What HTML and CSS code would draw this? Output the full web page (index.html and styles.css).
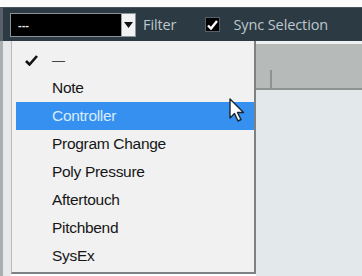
FILE: index.html
```html
<!DOCTYPE html>
<html>
<head>
<meta charset="utf-8">
<link rel="stylesheet" href="styles.css">
</head>
<body>
<div class="topstrip"></div>
<div class="toolbar">
  <div class="combo">
    <div class="combo-field">---</div>
    <div class="combo-btn">
      <svg width="9" height="6" viewBox="0 0 9 6"><path d="M0 0H9L4.5 6Z" fill="#111"/></svg>
    </div>
  </div>
  <span class="label filter">Filter</span>
  <span class="checkbox">
    <svg width="11" height="10" viewBox="0 0 11 10"><path d="M1 5.5L4 8.5L10 1" fill="none" stroke="#fff" stroke-width="2.4"/></svg>
  </span>
  <span class="label">Sync Selection</span>
</div>
<div class="main">
  <div class="gutter"></div>
  <div class="menu">
    <div class="item first"><span class="mark"><svg width="13" height="11" viewBox="0 0 13 11"><path d="M1 6L4.5 9.5L12 1" fill="none" stroke="#111" stroke-width="2.6"/></svg></span><span class="dash">—</span></div>
    <div class="item"><span class="mark"></span>Note</div>
    <div class="item selected"><span class="mark"></span>Controller</div>
    <div class="item"><span class="mark"></span>Program Change</div>
    <div class="item"><span class="mark"></span>Poly Pressure</div>
    <div class="item"><span class="mark"></span>Aftertouch</div>
    <div class="item"><span class="mark"></span>Pitchbend</div>
    <div class="item"><span class="mark"></span>SysEx</div>
  </div>
  <div class="rightpanel">
    <div class="rp-head"><div class="tick"></div></div>
    <div class="rp-body"></div>
  </div>
  <svg class="cursor" width="16" height="25" viewBox="0 0 16 25"><path d="M1 1V20L5.5 15.5L9 23L12 21.5L8.5 14.5H14.5Z" fill="#fff" stroke="#1b2530" stroke-width="1.4" stroke-linejoin="round"/></svg>
</div>
</body>
</html>
```
FILE: styles.css
```css
html, body {
  margin: 0;
  padding: 0;
  background: #ffffff;
  width: 362px;
  height: 276px;
  overflow: hidden;
}
.topstrip {
  height: 7px;
  background: #fbfbfb;
}
.toolbar {
  height: 34px;
  background: #2b3a43;
  border-left: 3px solid #59626a;
  border-top: 1px solid #4a555c;
  display: flex;
  align-items: center;
  padding-left: 7px;
  box-sizing: border-box;
  font-family: "Open Sans", "Noto Sans", sans-serif;
}
.combo {
  display: flex;
  height: 22px;
  border: 1px solid #8b9298;
  margin-top: 1px;
}
.combo-field {
  width: 110px;
  background: #000;
  color: #e8e8e8;
  font-family: "Liberation Sans", sans-serif;
  font-size: 11px;
  font-weight: bold;
  line-height: 22px;
  padding-left: 7px;
  box-sizing: border-box;
}
.combo-btn {
  width: 13px;
  background: #f2f2f2;
  border-left: 1px solid #9aa0a4;
  display: flex;
  align-items: center;
  justify-content: center;
}
.label {
  color: #bec8cd;
  font-size: 14.5px;
  letter-spacing: -0.1px;
}
.filter {
  margin-left: 7px;
}
.checkbox {
  width: 13px;
  height: 13px;
  background: #000;
  border: 1px solid #55606a;
  margin-left: 29px;
  margin-right: 13px;
  display: flex;
  align-items: center;
  justify-content: center;
}
.main {
  position: relative;
  display: flex;
  height: 235px;
}
.gutter {
  width: 8px;
  background: #e6e8e9;
  border-left: 3px solid #a9aeb1;
}
.menu {
  width: 238px;
  height: 227px;
  background: #f1f1f1;
  border-left: 1px solid #b9bcbe;
  border-right: 2px solid #7d8184;
  border-bottom: 2px solid #7d8184;
  padding: 4px 0 0 4px;
  font-family: "Liberation Sans", Arial, sans-serif;
  font-size: 15.5px;
  color: #161616;
  box-sizing: content-box;
}
.item {
  height: 28px;
  display: flex;
  align-items: center;
  letter-spacing: -0.3px;
}
.item.first {
  height: 29px;
  padding-top: 2px;
  box-sizing: border-box;
}
.item.selected {
  background: #3590f0;
  color: #d8ecff;
}
.mark {
  width: 36px;
  flex: none;
  display: flex;
  padding-left: 9px;
  box-sizing: border-box;
}
.dash {
  color: #444;
  font-size: 13px;
}
.rightpanel {
  flex: 1;
  display: flex;
  flex-direction: column;
  padding-top: 3px;
  background: #eef0f1;
}
.rp-head {
  height: 44px;
  background: #b6bab9;
  border-bottom: 2px solid #8e9291;
  position: relative;
}
.tick {
  position: absolute;
  left: 14px;
  bottom: 0;
  width: 2px;
  height: 18px;
  background: #8e9291;
}
.rp-body {
  flex: 1;
  background: #e3e8eb;
}
.cursor {
  position: absolute;
  left: 229px;
  top: 57px;
}
```
